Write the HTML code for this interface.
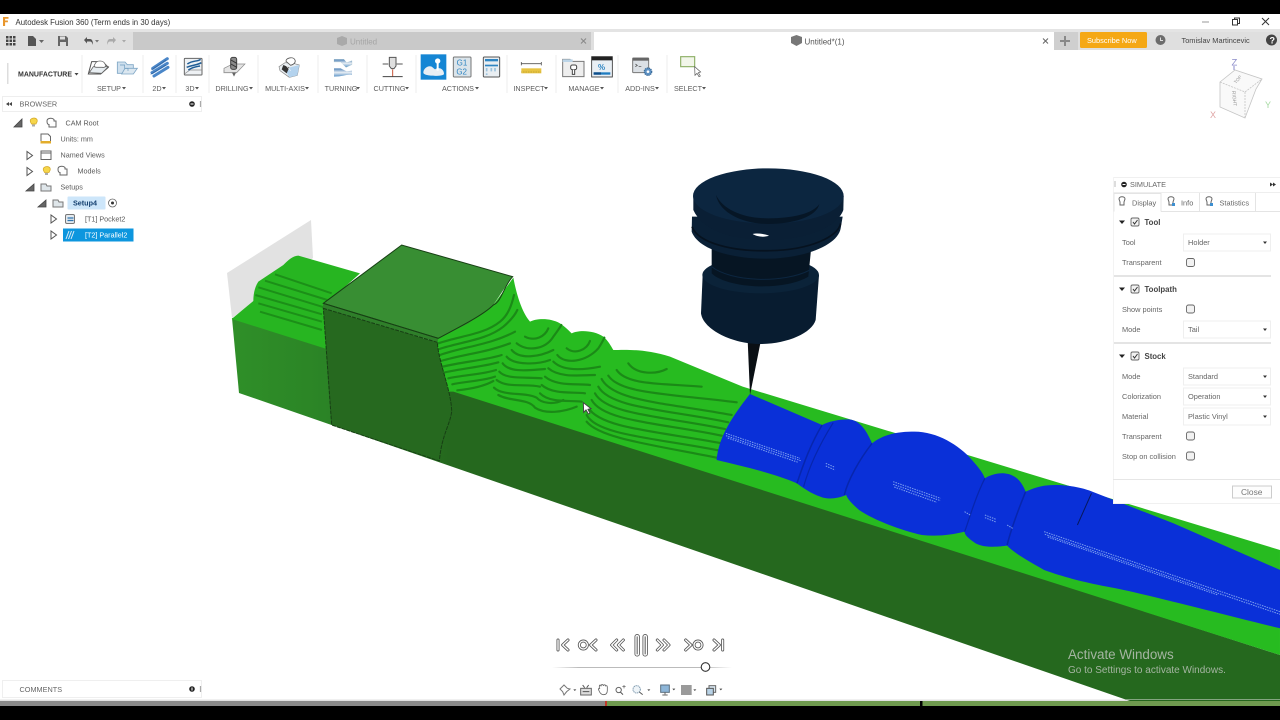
<!DOCTYPE html>
<html><head><meta charset="utf-8"><title>Autodesk Fusion 360</title>
<style>
html,body{margin:0;padding:0;background:#fff;width:1280px;height:720px;overflow:hidden}
svg{display:block}
text{font-family:"Liberation Sans",sans-serif;fill:#555;font-size:7.6px}
.ui{filter:blur(.3px)}
.lb{font-size:7.2px;fill:#5c5c5c;text-anchor:middle}
.tr{font-size:7.2px;fill:#5a5a5a}
.pl{font-size:7.4px;fill:#666}
.ph{font-size:7.8px;fill:#444;font-weight:bold}
.sel{fill:#fff;stroke:#efefef}
.chk{fill:#f2f2f2;stroke:#666;stroke-width:.9}
.sep{stroke:#ececec;stroke-width:1}
.ns{vector-effect:non-scaling-stroke}
</style></head><body>
<svg width="1280" height="720" viewBox="0 0 1280 720" xmlns="http://www.w3.org/2000/svg">
<defs>
<linearGradient id="front" gradientUnits="userSpaceOnUse" x1="232" y1="0" x2="450" y2="0"><stop offset="0" stop-color="#2f8f28"/><stop offset=".42" stop-color="#2b8426"/><stop offset="1" stop-color="#25681e"/></linearGradient>
<linearGradient id="sl" x1="0" x2="1" y1="0" y2="0"><stop offset="0" stop-color="#fff"/><stop offset=".15" stop-color="#bbb"/><stop offset=".85" stop-color="#bbb"/><stop offset="1" stop-color="#fff"/></linearGradient>
<linearGradient id="tb" x1="0" x2="0" y1="0" y2="1"><stop offset="0" stop-color="#4a7fb5"/><stop offset=".5" stop-color="#e8eef4"/><stop offset="1" stop-color="#5a93c6"/></linearGradient>
</defs>
<rect width="1280" height="720" fill="#fff"/>

<!-- 3D scene -->
<polygon points="227,273 311,220 313,258 232,318" fill="#e2e2e2"/>
<polygon points="232,318 1280,655 1280,700 1127,700 239,393" fill="url(#front)"/>
<g transform="translate(220,215) scale(.33333)">
<path d="M35,312L100,258C100,235 105,215 115,200L190,150C205,135 220,122 235,122L420,175 320,265 320,402Z" fill="#27b521"/>
<g fill="none" stroke="#1c8f18" stroke-width="6">
<path d="M165,178L335,235"/><path d="M135,197L322,255"/><path d="M115,217L312,277"/><path d="M106,240L306,298"/><path d="M115,265L306,320"/><path d="M120,290L306,345"/>
</g>
<path d="M880,188C890,240 905,290 930,320C950,310 990,308 1020,325C1035,335 1045,345 1055,355C1075,345 1120,345 1150,365C1165,378 1172,392 1180,405C1210,405 1270,400 1350,425L1568,515L3180,1005L3180,1320L700,530L640,530L640,375L820,270Z" fill="#27bb20"/>
<g fill="none" stroke="#1b8a17" stroke-width="6.500" stroke-linecap="round">
<path d="M655,385C720,362 790,360 840,320C865,300 875,270 882,240"/>
<path d="M658,402C725,380 800,375 850,335C870,318 885,300 892,285"/>
<path d="M660,420C730,395 810,390 885,350"/>
<path d="M663,438C730,418 800,412 870,385"/>
<path d="M668,455C730,440 800,435 845,420"/>
<path d="M675,472C730,460 790,455 835,442"/>
<path d="M685,490C730,480 790,478 828,465"/>
<path d="M697,508C730,500 790,498 825,485"/>
<path d="M712,526C750,522 790,515 820,498"/>
<path d="M915,365C945,380 975,365 985,340"/>
<path d="M890,385C920,410 975,405 1000,365C1012,348 1020,338 1024,330"/>
<path d="M875,405C900,435 960,425 1000,405"/>
<path d="M860,425C880,450 950,450 990,435"/>
<path d="M848,445C870,475 930,465 975,462"/>
<path d="M838,470C860,495 925,485 965,490"/>
<path d="M830,495C860,520 920,505 960,515"/>
<path d="M822,518C850,545 915,530 950,548C965,565 1000,570 1030,555"/>
<path d="M835,540C870,560 925,550 945,578C975,598 1030,592 1070,575"/>
<path d="M1040,400C1065,420 1100,405 1110,378"/>
<path d="M1012,420C1035,450 1100,440 1135,400C1145,385 1150,375 1153,368"/>
<path d="M1000,440C1030,470 1090,465 1140,455"/>
<path d="M985,460C1020,490 1085,480 1125,480"/>
<path d="M975,485C1010,515 1075,505 1110,510"/>
<path d="M965,510C1000,540 1060,530 1095,535"/>
<path d="M960,535C990,565 1050,555 1085,560"/>
<path d="M1225,445C1250,480 1310,478 1340,462"/>
<path d="M1190,465C1220,510 1320,505 1445,515"/>
<path d="M1165,482C1200,535 1330,535 1550,562"/>
<path d="M1145,492C1180,560 1350,565 1535,600"/>
<path d="M1135,515C1170,580 1350,585 1525,622"/>
<path d="M1125,535C1160,600 1340,605 1515,642"/>
<path d="M1115,555C1150,620 1330,625 1505,662"/>
<path d="M1105,578C1140,640 1320,650 1500,684"/>
<path d="M1100,600C1130,660 1310,670 1495,706"/>
<path d="M1100,620C1140,670 1300,690 1490,728"/>
</g>
<polygon points="310,265 545,90 878,185 850,225 820,270 745,325 655,370" fill="#388e33"/>
<polygon points="310,265 655,370 652,382 308,280" fill="#2f7f2a"/>
<path d="M310,280L652,382C655,440 695,530 695,590C690,630 665,660 658,738L335,630Z" fill="#26691f"/>
<g fill="none" stroke="#173f14" stroke-width="3">
<path d="M310,265L545,90L878,185C850,215 845,260 820,270C790,300 720,335 655,370Z"/>
<path d="M310,265L655,370"/>
</g>
<g fill="none" stroke="#173f14" stroke-width="3" stroke-dasharray="12 3">
<path d="M310,280L652,382C655,440 695,530 695,590C690,630 665,660 658,738L335,630Z"/>
</g>
<path d="M1090,563L1091,592 1098,585 1105,597 1110,594 1104,583 1113,581Z" fill="#fff" stroke="#444" stroke-width="3"/>
</g>

<!-- blue part -->
<g transform="translate(700,380) scale(.37,.33333)">
<path d="M135,42L330,135C345,125 375,118 400,118C430,118 450,150 465,190C500,160 540,155 580,155C640,155 700,195 735,240C755,265 765,280 770,295C790,280 825,272 850,290C865,300 875,320 880,335C910,320 930,315 960,315C1000,315 1040,325 1060,335L1280,430L1568,570L1568,745C1400,700 1200,640 1100,620C1030,605 980,590 930,570C890,545 850,520 830,497C810,500 770,505 745,490C725,475 715,465 715,455C680,465 640,470 600,465C540,450 470,420 430,390C415,375 400,360 395,345C375,355 345,360 325,350C300,340 280,325 262,310C200,280 120,260 45,240C50,190 65,140 135,42Z" fill="#0a30d8"/>
<g fill="none">
<path class="ns" d="M330,135C300,190 280,250 262,310" stroke="#0726ad" stroke-width="1.500"/>
<path class="ns" d="M360,128C325,190 295,260 280,320" stroke="#0726ad" stroke-width="1.200"/>
<path class="ns" d="M465,190C430,240 400,300 390,345" stroke="#0726ad" stroke-width="1.500"/>
<path class="ns" d="M770,295C740,360 725,430 715,455" stroke="#0726ad" stroke-width="1.200"/>
<path class="ns" d="M880,335C860,390 840,450 830,495" stroke="#0726ad" stroke-width="1.500"/>
</g>
<g fill="none" stroke="#7da0f0" stroke-width="1" stroke-dasharray="1.500 1">
<path class="ns" d="M70,160L270,235"/><path class="ns" d="M70,167L272,242"/><path class="ns" d="M75,174L265,247"/>
<path class="ns" d="M522,305L650,355"/><path class="ns" d="M522,313L650,362"/><path class="ns" d="M525,321L640,367"/>
<path class="ns" d="M930,455L1568,695"/><path class="ns" d="M932,463L1568,703"/><path class="ns" d="M940,471L1400,645"/>
<path class="ns" d="M340,250L365,262"/><path class="ns" d="M340,258L365,270"/><path class="ns" d="M770,405L800,418"/><path class="ns" d="M770,413L800,426"/><path class="ns" d="M715,395L730,405"/><path class="ns" d="M830,435L845,445"/>
</g>
<path class="ns" d="M1058,340L1020,435" stroke="#06185e" stroke-width="1" fill="none"/>
</g>

<!-- tool -->
<g transform="translate(670,160) scale(.33333)">
<polygon points="233,540 272,545 240,705" fill="#0a0f14"/>
<path d="M98,345L93,460C100,510 190,552 270,552C350,552 425,520 437,480L447,345Z" fill="#081c30"/>
<ellipse cx="272" cy="345" rx="175" ry="55" fill="#0b2339"/>
<path d="M125,200L125,340C170,385 340,395 415,350L430,200Z" fill="#061523"/>
<path d="M125,320C180,365 340,372 420,330" fill="none" stroke="#0c2640" stroke-width="3"/>
<path d="M66,170L65,215C85,270 190,298 300,296C420,292 505,250 512,205L518,170Z" fill="#0a2036"/>
<path d="M66,200C85,250 190,275 300,272C420,270 505,230 512,190" fill="none" stroke="#06121f" stroke-width="5"/>
<path d="M70,108L70,150C100,215 190,240 295,240C400,240 500,205 520,150L521,108Z" fill="#0a1f35"/>
<ellipse cx="295" cy="108" rx="226" ry="83" fill="#0c2640"/>
<path d="M138,105C150,165 230,192 295,192C370,192 440,170 448,132C430,160 370,175 295,175C220,175 160,150 138,105Z" fill="#061626"/>
<path d="M248,222C262,218 285,222 297,227C282,233 260,230 248,222Z" fill="#fff"/>
</g>

<g class="ui">
<!-- chrome -->
<rect width="1280" height="14" fill="#000"/>
<rect y="29" width="1280" height="3" fill="#e4e4e4"/>
<rect y="32" width="1280" height="18" fill="#dfdfdf"/>
<rect x="133" y="32" width="458" height="18" fill="#c9c9c9"/>
<rect x="594" y="32" width="460" height="18" fill="#fff"/>
<rect x="1054" y="32" width="24" height="18" fill="#cfcfcf"/>
<!-- title -->
<path d="M3,17h5.5v1.8h-3.4v1.7h2.8v1.7h-2.8V26H3Z" fill="#e8962c"/>
<text x="15.500" y="24.800" style="font-size:7.800px;fill:#333">Autodesk Fusion 360 (Term ends in 30 days)</text>
<path d="M1202,22h7" stroke="#999"/>
<rect x="1232.500" y="19.500" width="5" height="5.500" fill="none" stroke="#333"/><path d="M1234.500,19.500v-1.500h5v5.500h-2" fill="none" stroke="#333"/>
<path d="M1262,18l7,7m0-7l-7,7" stroke="#333"/>
<!-- tab bar left -->
<g fill="#444"><rect x="6" y="36" width="2.500" height="2.500"/><rect x="9.500" y="36" width="2.500" height="2.500"/><rect x="13" y="36" width="2.500" height="2.500"/><rect x="6" y="39.500" width="2.500" height="2.500"/><rect x="9.500" y="39.500" width="2.500" height="2.500"/><rect x="13" y="39.500" width="2.500" height="2.500"/><rect x="6" y="43" width="2.500" height="2.500"/><rect x="9.500" y="43" width="2.500" height="2.500"/><rect x="13" y="43" width="2.500" height="2.500"/></g>
<path d="M28,36h5l3,3v7h-8Z" fill="#555"/><path d="M39,40h5l-2.500,3Z" fill="#666"/>
<path d="M58,36h8l2,2v8H58Z" fill="#666"/><rect x="60" y="36.500" width="5" height="3" fill="#ddd"/><rect x="60" y="42" width="6" height="4" fill="#ddd"/>
<path d="M84,40l3-3v2h3c2,0 3,2 3,6c-1-3-2-3.500-3-3.500h-3v2Z" fill="#555"/><path d="M95,40h4l-2,2.500Z" fill="#777"/>
<path d="M116,40l-3-3v2h-3c-2,0-3,2-3,6c1-3 2-3.500 3-3.500h3v2Z" fill="#aaa"/><path d="M122,40h4l-2,2.500Z" fill="#aaa"/>
<path d="M337,38l5-2 5,2v6l-5,2-5-2Z" fill="#a9a9a9"/>
<text x="350" y="44.500" style="fill:#a5a5a5;font-size:8px">Untitled</text>
<path d="M581,38.500l5,5m0-5l-5,5" stroke="#888"/>
<path d="M791,37l5.500-2 5.500,2v6l-5.500,3-5.500-3Z" fill="#777"/>
<text x="804.500" y="44.500" style="fill:#555;font-size:8px">Untitled*(1)</text>
<path d="M1043,38.500l5,5m0-5l-5,5" stroke="#666"/>
<path d="M1065,36v10m-5-5h10" stroke="#888" stroke-width="2"/>
<rect x="1080" y="32" width="67" height="16" rx="1.500" fill="#f5a815"/>
<text x="1087" y="43" style="fill:#fff;font-size:7.400px">Subscribe Now</text>
<circle cx="1160.500" cy="40" r="5" fill="#6c6c6c"/><path d="M1160.500,37.500v3h2.500" stroke="#ddd" fill="none"/>
<text x="1181.500" y="43" style="fill:#444;font-size:7.400px">Tomislav Martincevic</text>
<circle cx="1271.500" cy="40" r="5.500" fill="#444"/><text x="1269.500" y="43.500" style="fill:#fff;font-size:9px;font-weight:bold">?</text>

<!-- toolbar -->
<rect x="7" y="63" width="1.500" height="21" fill="#ddd"/>
<text x="18" y="76.500" textLength="54" lengthAdjust="spacingAndGlyphs" style="font-size:7.600px;fill:#333;font-weight:bold">MANUFACTURE</text><path d="M74.500,73h4l-2,2.500Z" fill="#444"/>
<g class="sep"><path d="M82,55v38M143,55v38M176,55v38M209,55v38M258,55v38M318,55v38M367,55v38M416,55v38M507,55v38M556,55v38M618,55v38M667,55v38" stroke="#ededed"/></g>
<g class="lb">
<text class="lb" x="109" y="91">SETUP</text><path d="M122,87h4l-2,2.500Z" fill="#555"/>
<text class="lb" x="157" y="91">2D</text><path d="M162,87h4l-2,2.500Z" fill="#555"/>
<text class="lb" x="190" y="91">3D</text><path d="M195,87h4l-2,2.500Z" fill="#555"/>
<text class="lb" x="232" y="91">DRILLING</text><path d="M249,87h4l-2,2.500Z" fill="#555"/>
<text class="lb" x="285" y="91">MULTI-AXIS</text><path d="M305,87h4l-2,2.500Z" fill="#555"/>
<text class="lb" x="341" y="91">TURNING</text><path d="M356,87h4l-2,2.500Z" fill="#555"/>
<text class="lb" x="389.500" y="91">CUTTING</text><path d="M405,87h4l-2,2.500Z" fill="#555"/>
<text class="lb" x="458" y="91">ACTIONS</text><path d="M475,87h4l-2,2.500Z" fill="#555"/>
<text class="lb" x="529" y="91">INSPECT</text><path d="M544,87h4l-2,2.500Z" fill="#555"/>
<text class="lb" x="584" y="91">MANAGE</text><path d="M600,87h4l-2,2.500Z" fill="#555"/>
<text class="lb" x="640" y="91">ADD-INS</text><path d="M655,87h4l-2,2.500Z" fill="#555"/>
<text class="lb" x="688" y="91">SELECT</text><path d="M702,87h4l-2,2.500Z" fill="#555"/>
</g>
<!-- toolbar icons group A -->
<g transform="translate(80,50) scale(.33333)">
<path d="M35,35H55L62,42H75L85,52 62,72H25Z" fill="#fff" stroke="#555" stroke-width="3"/>
<path d="M28,68L40,50H85L65,70Z" fill="#e8eef2" stroke="#666" stroke-width="2.500"/>
<path d="M45,42c5-12 25-12 30,0c5,5 0,12-8,10h-18c-7,0-8-6-4-10Z" fill="#fff" stroke="#666" stroke-width="2.500"/>
<path d="M112,36H135L142,44H160V70H112Z" fill="#cfe0ee" stroke="#7ea6c5" stroke-width="2.500"/>
<path d="M125,72L135,55H172L160,72Z" fill="#dbe7f0" stroke="#7ea6c5" stroke-width="2.500"/>
<path d="M120,45h14v10h10v8" fill="none" stroke="#6d9cbf" stroke-width="2"/>
<g fill="none" stroke="#4a86c8" stroke-width="9" stroke-linecap="round"><path d="M218,55L262,26"/><path d="M216,68L262,40"/><path d="M222,78L264,52"/></g>
<g fill="none" stroke="#1f4e88" stroke-width="1.500"><path d="M214,60L258,30"/><path d="M212,73L258,45"/></g>
<rect x="313" y="25" width="53" height="50" rx="2" fill="#eef1f4" stroke="#666" stroke-width="3"/>
<path d="M313,72L330,60H366" fill="none" stroke="#888" stroke-width="2"/>
<path d="M322,42C340,30 350,36 362,28M320,52C340,44 350,46 364,38M325,60C340,50 350,50 360,48" fill="none" stroke="#1f5d96" stroke-width="4.500"/>
<path d="M432,55L458,42H495L470,68H432Z" fill="#e4e4e4" stroke="#888" stroke-width="2"/>
<path d="M470,68H432V60" fill="none" stroke="#999" stroke-width="3"/>
<rect x="452" y="22" width="18" height="36" rx="6" fill="#8b8b8b" stroke="#444" stroke-width="3"/>
<path d="M453,30L470,40M453,42L470,52" stroke="#333" stroke-width="3"/>
<path d="M456,68h12l-6,12Z" fill="#666"/>
<path d="M597,50L615,38 640,40 658,45 652,76 628,82 600,62Z" fill="#e8eef2" stroke="#888" stroke-width="2"/>
<path d="M630,52L658,45 652,76 628,82 620,68Z" fill="#b4d3ee"/>
<path d="M618,34C616,24 640,18 645,30C648,38 640,44 632,46Z" fill="#fff" stroke="#555" stroke-width="2.500"/>
<path d="M610,45L628,52 620,70 605,58Z" fill="#333"/>
<path d="M616,44L632,62" stroke="#fff" stroke-width="2"/>
</g>
<!-- group B -->
<g transform="translate(320,50) scale(.33333)">
<path d="M42,28H72L80,38 96,32V44L78,52 62,36H42Z" fill="url(#tb)" stroke="#8aa" stroke-width=".5"/>
<path d="M42,55H62L80,64 96,62V75C80,72 70,80 42,80Z" fill="url(#tb)"/>
<path d="M188,42H205M230,42H248" stroke="#555" stroke-width="3"/>
<path d="M208,22H228V48L222,56H214L208,48Z" fill="#dfdfdf" stroke="#555" stroke-width="3"/>
<path d="M218,58V80" stroke="#c8553a" stroke-width="3"/>
<path d="M188,80H248" stroke="#444" stroke-width="3"/>
<rect x="302" y="13" width="77" height="76" fill="#1586d4"/>
<path d="M310,68C310,55 325,45 335,50L345,58C355,50 372,55 372,72C372,80 310,80 310,68Z" fill="#e8eef4"/>
<circle cx="353" cy="33" r="8" fill="#fff"/><path d="M353,40V62" stroke="#fff" stroke-width="6"/>
<rect x="400" y="21" width="53" height="60" rx="3" fill="#dbe4ea" stroke="#777" stroke-width="3"/>
<text x="410" y="47" style="font-size:24px;fill:#2f85c2">G1</text><text x="409" y="73" style="font-size:24px;fill:#2f85c2">G2</text>
<rect x="490" y="21" width="49" height="60" rx="3" fill="#e9eef2" stroke="#555" stroke-width="3"/>
<rect x="495" y="27" width="39" height="7" fill="#2f85c2"/><rect x="495" y="44" width="39" height="5" fill="#2f85c2"/>
<path d="M500,54v10M514,54v10M500,70v5M525,54v10" stroke="#9cc3dd" stroke-width="5"/>
<path d="M604,41H664M604,36V46M664,36V46" stroke="#555" stroke-width="2.500" fill="none"/>
<rect x="604" y="55" width="60" height="15" fill="#e7c341"/>
<path d="M604,66H664" stroke="#a88a22" stroke-width="2" stroke-dasharray="2 3"/>
</g>
<!-- group C -->
<g transform="translate(560,50) scale(.33333)">
<path d="M8,28H30L36,34H72V80H8Z" fill="#eee" stroke="#777" stroke-width="3"/>
<rect x="8" y="28" width="30" height="8" fill="#bcd5e8"/>
<rect x="32" y="45" width="18" height="14" rx="5" fill="#fff" stroke="#444" stroke-width="3"/><path d="M37,59V73H44V59" fill="#fff" stroke="#444" stroke-width="3"/>
<rect x="95" y="20" width="62" height="61" fill="#e9eff4" stroke="#333" stroke-width="2.500"/>
<rect x="95" y="20" width="62" height="11" fill="#222"/>
<rect x="101" y="67" width="50" height="7" fill="#1f7cc0"/><rect x="101" y="67" width="22" height="7" fill="#0f4e8a"/>
<text x="114" y="60" style="font-size:24px;fill:#2f85c2;font-weight:bold">%</text>
<rect x="218" y="24" width="48" height="44" rx="2" fill="#dbe0e5" stroke="#777" stroke-width="3"/>
<rect x="218" y="24" width="48" height="8" fill="#666"/>
<path d="M226,42l6,4-6,4M236,50h8" stroke="#444" stroke-width="2" fill="none"/>
<circle cx="264" cy="65" r="11" fill="#5e92c4" stroke="#3d6e9c" stroke-width="4" stroke-dasharray="4 2"/><circle cx="264" cy="65" r="4" fill="#fff"/>
<rect x="362" y="20" width="42" height="30" fill="#f2f6ea" stroke="#8fb168" stroke-width="3.500"/>
<path d="M404,50L405,76 411,70 417,80 421,78 415,68 422,66Z" fill="#fff" stroke="#555" stroke-width="2"/>
</g>

<!-- browser -->
<rect x="2.500" y="96.500" width="199" height="15" fill="#fff" stroke="#eee"/>
<path d="M9,102v4l-3-2Zm3,0v4l-3-2Z" fill="#444"/>
<text x="19.500" y="106.500" style="font-size:7.300px;fill:#666">BROWSER</text>
<circle cx="192" cy="104" r="2.800" fill="#222"/><rect x="190.500" y="103.500" width="3" height="1" fill="#fff"/><path d="M200.500,101v6" stroke="#aaa" stroke-width="1.200"/>
<g class="tr">
<path d="M14,127h8v-8Z" fill="#666" stroke="#444" stroke-width=".8"/>
<path d="M30.500,119.500c2,-2 5,-2 6.500,0c1,2-.5,3-1,4.500h-4.500c-.5-1.500-2-2.500-1-4.500Z" fill="#f6d64a" stroke="#d4a92a" stroke-width=".7"/><rect x="32" y="124.500" width="3" height="2" fill="#aaa"/>
<path d="M47,121c0-3 5-3.500 7-1.500v1.500h2v6h-7v-2.500c-1.500,0-2-2-2-3.500Z" fill="#fff" stroke="#666"/>
<text class="tr" x="65.500" y="125.500">CAM Root</text>
<path d="M41,134h7l2.500,2.500v5.500H41Z" fill="#fff" stroke="#666"/><rect x="40.500" y="141" width="10.500" height="2.500" fill="#e3ad2c"/>
<text class="tr" x="60.500" y="141.500">Units: mm</text>
<path d="M27,151.500v8l5.500-4Z" fill="#fff" stroke="#555"/><path d="M41,151h10v8.500H41Zm0,2h10" fill="#fff" stroke="#666"/>
<text class="tr" x="60.500" y="157.500">Named Views</text>
<path d="M27,167.500v8l5.500-4Z" fill="#fff" stroke="#555"/>
<path d="M43.500,168c2,-2 5,-2 6.500,0c1,2-.5,3-1,4.500h-4.500c-.5-1.500-2-2.500-1-4.500Z" fill="#f6d64a" stroke="#d4a92a" stroke-width=".7"/><rect x="45" y="173" width="3" height="2" fill="#aaa"/>
<path d="M58,169c0-3 5-3.500 7-1.500v1.500h2v6h-7v-2.500c-1.500,0-2-2-2-3.500Z" fill="#fff" stroke="#666"/>
<text class="tr" x="77.500" y="173.500">Models</text>
<path d="M26,191h8v-7Z" fill="#666" stroke="#444" stroke-width=".8"/>
<path d="M41,184h5l1,2h4v5H41Z" fill="#dfe6ea" stroke="#777"/>
<text class="tr" x="60.500" y="189.500">Setups</text>
<rect x="67.500" y="196.500" width="38" height="13" rx="1" fill="#cde6fa"/>
<path d="M38,207h8v-7Z" fill="#666" stroke="#444" stroke-width=".8"/>
<path d="M53,200h5l1,2h4v5H53Z" fill="#dfe6ea" stroke="#777"/>
<text class="tr" x="73" y="205.500" style="fill:#123e6e;font-weight:bold">Setup4</text>
<circle cx="112.500" cy="203" r="4" fill="#fff" stroke="#666" stroke-width=".8"/><circle cx="112.500" cy="203" r="1.500" fill="#333"/>
<path d="M51,215v8l5.500-4Z" fill="#fff" stroke="#555"/>
<rect x="65.500" y="214.500" width="9" height="9" rx="1.500" fill="#e3e9ee" stroke="#777"/><path d="M67.500,218h6m-6,2.500h6" stroke="#2f75b0" stroke-width="1.200"/>
<text class="tr" x="85" y="221.500">[T1] Pocket2</text>
<path d="M51,231v8l5.500-4Z" fill="#fff" stroke="#555"/>
<rect x="63" y="228.500" width="70.500" height="13" fill="#0d96de"/>
<path d="M66,239l3-8m-.5,8l3-8m-.5,8l3-8" stroke="#dbeaf5" stroke-width="1"/>
<text class="tr" x="85" y="237.500" style="fill:#fff">[T2] Parallel2</text>
</g>

<!-- navcube -->
<g fill="none" stroke="#c4c4c4" stroke-width=".8">
<path d="M1220,82L1235,70 1262,79 1256,89 1245,118 1220,107Z" fill="#f9f9f9"/>
<path d="M1220,82L1245,92 1262,79M1245,92V118" stroke-dasharray="2 1"/>
</g>
<text x="1231.500" y="65.500" style="font-size:9.500px;fill:#8a8ac8">Z</text>
<path d="M1234,66v4" stroke="#8a8ac8"/>
<text x="1265" y="108" style="font-size:9px;fill:#a4d9a0">Y</text>
<text x="1210" y="118" style="font-size:9px;fill:#dfa3a3">X</text>
<text transform="translate(1232,91) rotate(84)" style="font-size:5px;fill:#999">RIGHT</text>
<text transform="translate(1236,84) rotate(-50)" style="font-size:4.500px;fill:#999">TOP</text>

<!-- simulate panel -->
<rect x="1113" y="177" width="167" height="326" fill="#fff"/>
<path d="M1113,177.500h167M1113,503.500h167" stroke="#f0f0f0"/><path d="M1113.500,177v326" stroke="#f3f3f3"/>
<path d="M1115,181v6" stroke="#bbb"/>
<circle cx="1124" cy="184.500" r="2.800" fill="#222"/><rect x="1122.500" y="184" width="3" height="1" fill="#fff"/>
<text x="1130" y="187" style="font-size:7.300px;fill:#666">SIMULATE</text>
<path d="M1270,182.500v4l3-2Zm3,0v4l3-2Z" fill="#333"/>
<path d="M1113,192.500h167" stroke="#eee"/>
<path d="M1114,211.500v-18h47v18M1199.500,193v18M1255.500,193v18M1161,211.500h119" fill="none" stroke="#e4e4e4"/>
<g fill="none" stroke="#666"><path d="M1119,199c0-3 6-3 6,0l-1,3v3h-4v-3Z"/><path d="M1168,199c0-3 6-3 6,0l-1,3v3h-4v-3Z"/><path d="M1206,199c0-3 6-3 6,0l-1,3v3h-4v-3Z"/></g>
<rect x="1172" y="203" width="3" height="3" fill="#3e8fd0"/><rect x="1210" y="203" width="3" height="3" fill="#3e8fd0"/>
<text class="pl" x="1132" y="205.500">Display</text><text class="pl" x="1181" y="205.500">Info</text><text class="pl" x="1219.500" y="205.500">Statistics</text>
<!-- headers -->
<g>
<path d="M1119,220.500h6l-3,3.500Z" fill="#222"/><rect class="chk" x="1131" y="218" width="8" height="8" rx="1.500"/><path d="M1133,222l1.500,2 3-4" fill="none" stroke="#333"/><text class="ph" x="1144.500" y="225">Tool</text>
<path d="M1119,287.500h6l-3,3.500Z" fill="#222"/><rect class="chk" x="1131" y="285" width="8" height="8" rx="1.500"/><path d="M1133,289l1.500,2 3-4" fill="none" stroke="#333"/><text class="ph" x="1144.500" y="292">Toolpath</text>
<path d="M1119,354.500h6l-3,3.500Z" fill="#222"/><rect class="chk" x="1131" y="352" width="8" height="8" rx="1.500"/><path d="M1133,356l1.500,2 3-4" fill="none" stroke="#333"/><text class="ph" x="1144.500" y="359">Stock</text>
</g>
<path d="M1114,276h157M1114,343h157" stroke="#c8c8c8" stroke-width="1.100"/>
<text class="pl" x="1122" y="245">Tool</text>
<text class="pl" x="1122" y="265">Transparent</text>
<text class="pl" x="1122" y="312">Show points</text>
<text class="pl" x="1122" y="332">Mode</text>
<text class="pl" x="1122" y="379">Mode</text>
<text class="pl" x="1122" y="399">Colorization</text>
<text class="pl" x="1122" y="419">Material</text>
<text class="pl" x="1122" y="439">Transparent</text>
<text class="pl" x="1122" y="459">Stop on collision</text>
<g>
<rect class="sel" x="1183.500" y="234" width="87" height="17"/><text class="pl" x="1188" y="245">Holder</text><path d="M1263,241.500h4l-2,2.500Z" fill="#333"/>
<rect class="sel" x="1183.500" y="321" width="87" height="17"/><text class="pl" x="1188" y="332">Tail</text><path d="M1263,328.500h4l-2,2.500Z" fill="#333"/>
<rect class="sel" x="1183.500" y="368" width="87" height="17"/><text class="pl" x="1188" y="379">Standard</text><path d="M1263,375.500h4l-2,2.500Z" fill="#333"/>
<rect class="sel" x="1183.500" y="388" width="87" height="17"/><text class="pl" x="1188" y="399">Operation</text><path d="M1263,395.500h4l-2,2.500Z" fill="#333"/>
<rect class="sel" x="1183.500" y="408" width="87" height="17"/><text class="pl" x="1188" y="419">Plastic Vinyl</text><path d="M1263,415.500h4l-2,2.500Z" fill="#333"/>
</g>
<rect class="chk" x="1186.500" y="258.500" width="8" height="8" rx="2"/>
<rect class="chk" x="1186.500" y="305" width="8" height="8" rx="2"/>
<rect class="chk" x="1186.500" y="432" width="8" height="8" rx="2"/>
<rect class="chk" x="1186.500" y="452" width="8" height="8" rx="2"/>
<path d="M1113,479.500h167" stroke="#e6e6e6"/>
<rect x="1232.500" y="486" width="39" height="12" fill="#fdfdfd" stroke="#ccc"/>
<text x="1241" y="495" style="font-size:8.400px;fill:#777">Close</text>

<!-- playback -->
<g transform="translate(540,625) scale(.33333)" fill="none" stroke-linecap="round" stroke-linejoin="round">
<g stroke="#555" stroke-width="9">
<path d="M54,45V75"/><path d="M84,45L68,60 84,75"/>
<circle cx="130" cy="60" r="12"/><path d="M168,45L152,60 168,75"/>
<path d="M230,45L215,60 230,75"/><path d="M250,45L235,60 250,75"/>
<rect x="288" y="32" width="7" height="58" rx="3"/><rect x="312" y="32" width="7" height="58" rx="3"/>
<path d="M352,45L367,60 352,75"/><path d="M372,45L387,60 372,75"/>
<path d="M437,45L453,60 437,75"/><circle cx="474" cy="60" r="12"/>
<path d="M522,45L538,60 522,75"/><path d="M548,45V75"/>
</g>
<g stroke="#fff" stroke-width="4">
<path d="M54,45V75"/><path d="M84,45L68,60 84,75"/>
<circle cx="130" cy="60" r="12"/><path d="M168,45L152,60 168,75"/>
<path d="M230,45L215,60 230,75"/><path d="M250,45L235,60 250,75"/>
<rect x="288" y="32" width="7" height="58" rx="3"/><rect x="312" y="32" width="7" height="58" rx="3"/>
<path d="M352,45L367,60 352,75"/><path d="M372,45L387,60 372,75"/>
<path d="M437,45L453,60 437,75"/><circle cx="474" cy="60" r="12"/>
<path d="M522,45L538,60 522,75"/><path d="M548,45V75"/>
</g>
</g>
<rect x="552" y="667" width="180" height="1" fill="url(#sl)"/>
<circle cx="705.500" cy="667" r="4.300" fill="#fff" stroke="#333" stroke-width="1.100"/>
<!-- nav bar -->
<g transform="translate(540,625) scale(.33333)">
<path d="M60,192L72,180 82,190 90,192 80,200 72,210 68,200Z" fill="#fff" stroke="#777" stroke-width="3"/>
<path d="M100,193h9l-4.500,5Z" fill="#444"/>
<rect x="122" y="190" width="32" height="20" fill="#ddd" stroke="#666" stroke-width="3"/><path d="M128,180l6,8M146,180l-6,8M128,200h20" stroke="#555" stroke-width="3"/>
<path d="M178,190v-6c0-5 5-5 5,0c0-7 7-7 7,-1c0-5 7-5 7,1c0-3 5-3 5,2v10c0,10-6,13-12,13s-10-4-14-14c-2-5 2-6 4-3Z" fill="#fff" stroke="#666" stroke-width="2.500"/>
<circle cx="236" cy="195" r="8" fill="#fff" stroke="#666" stroke-width="3"/><path d="M241,201l8,8" stroke="#555" stroke-width="3"/><path d="M252,180v10m-5-5h10" stroke="#555" stroke-width="2"/>
<circle cx="290" cy="193" r="11" fill="#eef4f8" stroke="#7b97ad" stroke-width="3" stroke-dasharray="4 2"/><path d="M298,201l10,8" stroke="#555" stroke-width="3"/>
<path d="M322,193h9l-4.500,5Z" fill="#444"/>
<rect x="362" y="180" width="26" height="22" fill="#8db6d9" stroke="#5a6f80" stroke-width="3"/><path d="M375,202v6m-8,2h16" stroke="#666" stroke-width="3"/>
<path d="M397,191h9l-4.500,5Z" fill="#444"/>
<rect x="423" y="180" width="32" height="30" fill="#9a9a9a"/>
<path d="M460,193h9l-4.500,5Z" fill="#444"/>
<rect x="507" y="182" width="20" height="20" fill="#d8e6f0" stroke="#666" stroke-width="3"/><rect x="500" y="190" width="20" height="20" fill="#b8d2e6" stroke="#555" stroke-width="3"/>
<path d="M538,191h9l-4.500,5Z" fill="#444"/>
</g>
<!-- comments -->
<rect x="2.500" y="680.500" width="199" height="17" fill="#fff" stroke="#efefef"/>
<text x="19.500" y="692" style="font-size:7.300px;fill:#666">COMMENTS</text>
<circle cx="192" cy="689" r="2.800" fill="#222"/><rect x="191.500" y="687.500" width="1" height="3" fill="#fff"/><path d="M200.500,686v6" stroke="#aaa" stroke-width="1.200"/>
<!-- activate windows -->
<text x="1068" y="659" style="font-size:13.400px;fill:#a5b5a2">Activate Windows</text>
<text x="1068" y="673" style="font-size:10px;fill:#a5b5a2">Go to Settings to activate Windows.</text>
</g>

<!-- player bottom -->
<rect y="699.500" width="1280" height="1.500" fill="#e2e2e2"/>
<polygon points="1127,700 1280,700 1280,701 1130,701" fill="#25661d"/>
<rect y="701" width="605" height="5" fill="#8a8a8a"/>
<rect x="605" y="701" width="2" height="5" fill="#c0392b"/>
<rect x="607" y="701" width="673" height="5" fill="#6f9a4f"/>
<rect x="920" y="701" width="2.500" height="5" fill="#000"/>
<rect y="706" width="1280" height="14" fill="#000"/>
</svg>
</body></html>
